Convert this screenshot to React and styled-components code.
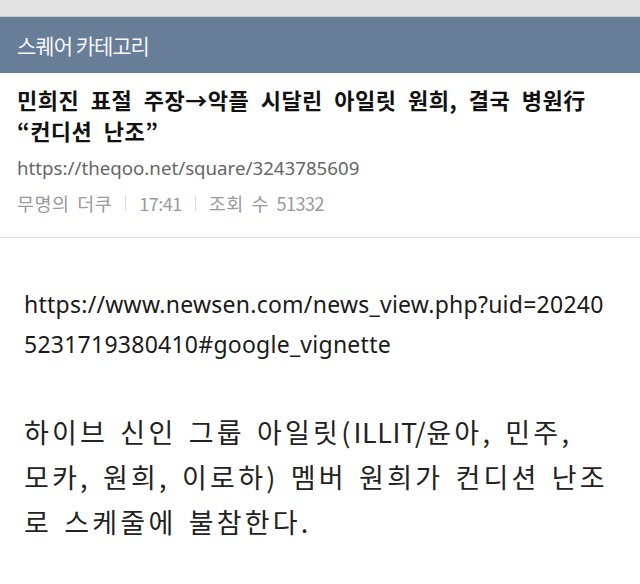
import React from "react";
import styled, { createGlobalStyle } from "styled-components";

const Global = createGlobalStyle`
  html, body { margin: 0; padding: 0; background: #ffffff; }
  body { font-family: "Noto Sans CJK KR", "Noto Sans", sans-serif; }
`;

const Page = styled.div`
  width: 640px;
  height: 584px;
  overflow: hidden;
  background: #ffffff;
  display: flex;
  flex-direction: column;
`;

const TopStrip = styled.div`
  height: 16px;
  flex: none;
  background: #e3e3e3;
  border-bottom: 1px solid #c8ccd3;
`;

const CategoryBar = styled.div`
  height: 56px;
  flex: none;
  background: #687d98;
  display: flex;
  align-items: center;
  padding: 0 17px;
  color: #f4f6f9;
  font-size: 21px;
  letter-spacing: -1px;
`;

const PostHead = styled.div`
  flex: none;
  padding: 11px 17px 0;
  height: 165px;
  border-bottom: 1px solid #dedede;
  box-sizing: border-box;
`;

const Title = styled.h1`
  margin: 0;
  font-size: 22px;
  font-weight: 700;
  line-height: 31px;
  color: #111;
  letter-spacing: 0.5px;
  word-spacing: 6px;
`;

const SourceUrl = styled.div`
  margin-top: 9px;
  font-family: "Noto Sans", sans-serif;
  font-size: 18.7px;
  line-height: 26px;
  color: #666;
`;

const Meta = styled.div`
  margin-top: 9px;
  display: flex;
  align-items: center;
  gap: 13px;
  font-size: 18.5px;
  line-height: 26px;
  color: #9a9a9a;
  letter-spacing: 0.5px;
  word-spacing: 3px;
`;

const Num = styled.span`
  font-size: 18px;
  letter-spacing: -0.5px;
`;

const Sep = styled.span`
  width: 1px;
  height: 15px;
  background: #d9d9d9;
`;

const Body = styled.div`
  padding: 46px 24px 0;
`;

const LinkText = styled.p`
  margin: 0;
  font-family: "Noto Sans", sans-serif;
  font-size: 23px;
  line-height: 40px;
  color: #1a1a1a;
  letter-spacing: 0.25px;
  white-space: nowrap;
`;

const Paragraph = styled.p`
  margin: 45px 0 0 0;
  font-size: 27px;
  line-height: 45px;
  color: #222;
  letter-spacing: 3.2px;
  word-spacing: 3px;
  white-space: nowrap;
`;

const Latin = styled.span`
  letter-spacing: 0.6px;
`;

export default function App() {
  return (
    <Page>
      <Global />
      <TopStrip />
      <CategoryBar>스퀘어 카테고리</CategoryBar>
      <PostHead>
        <Title>
          민희진 표절 주장→악플 시달린 아일릿 원희, 결국 병원行
          <br />“컨디션 난조”
        </Title>
        <SourceUrl>https://theqoo.net/square/3243785609</SourceUrl>
        <Meta>
          <span>무명의 더쿠</span>
          <Sep />
          <Num>17:41</Num>
          <Sep />
          <span>
            조회 수 <Num>51332</Num>
          </span>
        </Meta>
      </PostHead>
      <Body>
        <LinkText>
          https://www.newsen.com/news_view.php?uid=20240
          <br />
          5231719380410#google_vignette
        </LinkText>
        <Paragraph>
          하이브 신인 그룹 아일릿(<Latin>ILLIT/</Latin>윤아, 민주,
          <br />
          모카, 원희, 이로하) 멤버 원희가 컨디션 난조
          <br />
          로 스케줄에 불참한다.
        </Paragraph>
      </Body>
    </Page>
  );
}
